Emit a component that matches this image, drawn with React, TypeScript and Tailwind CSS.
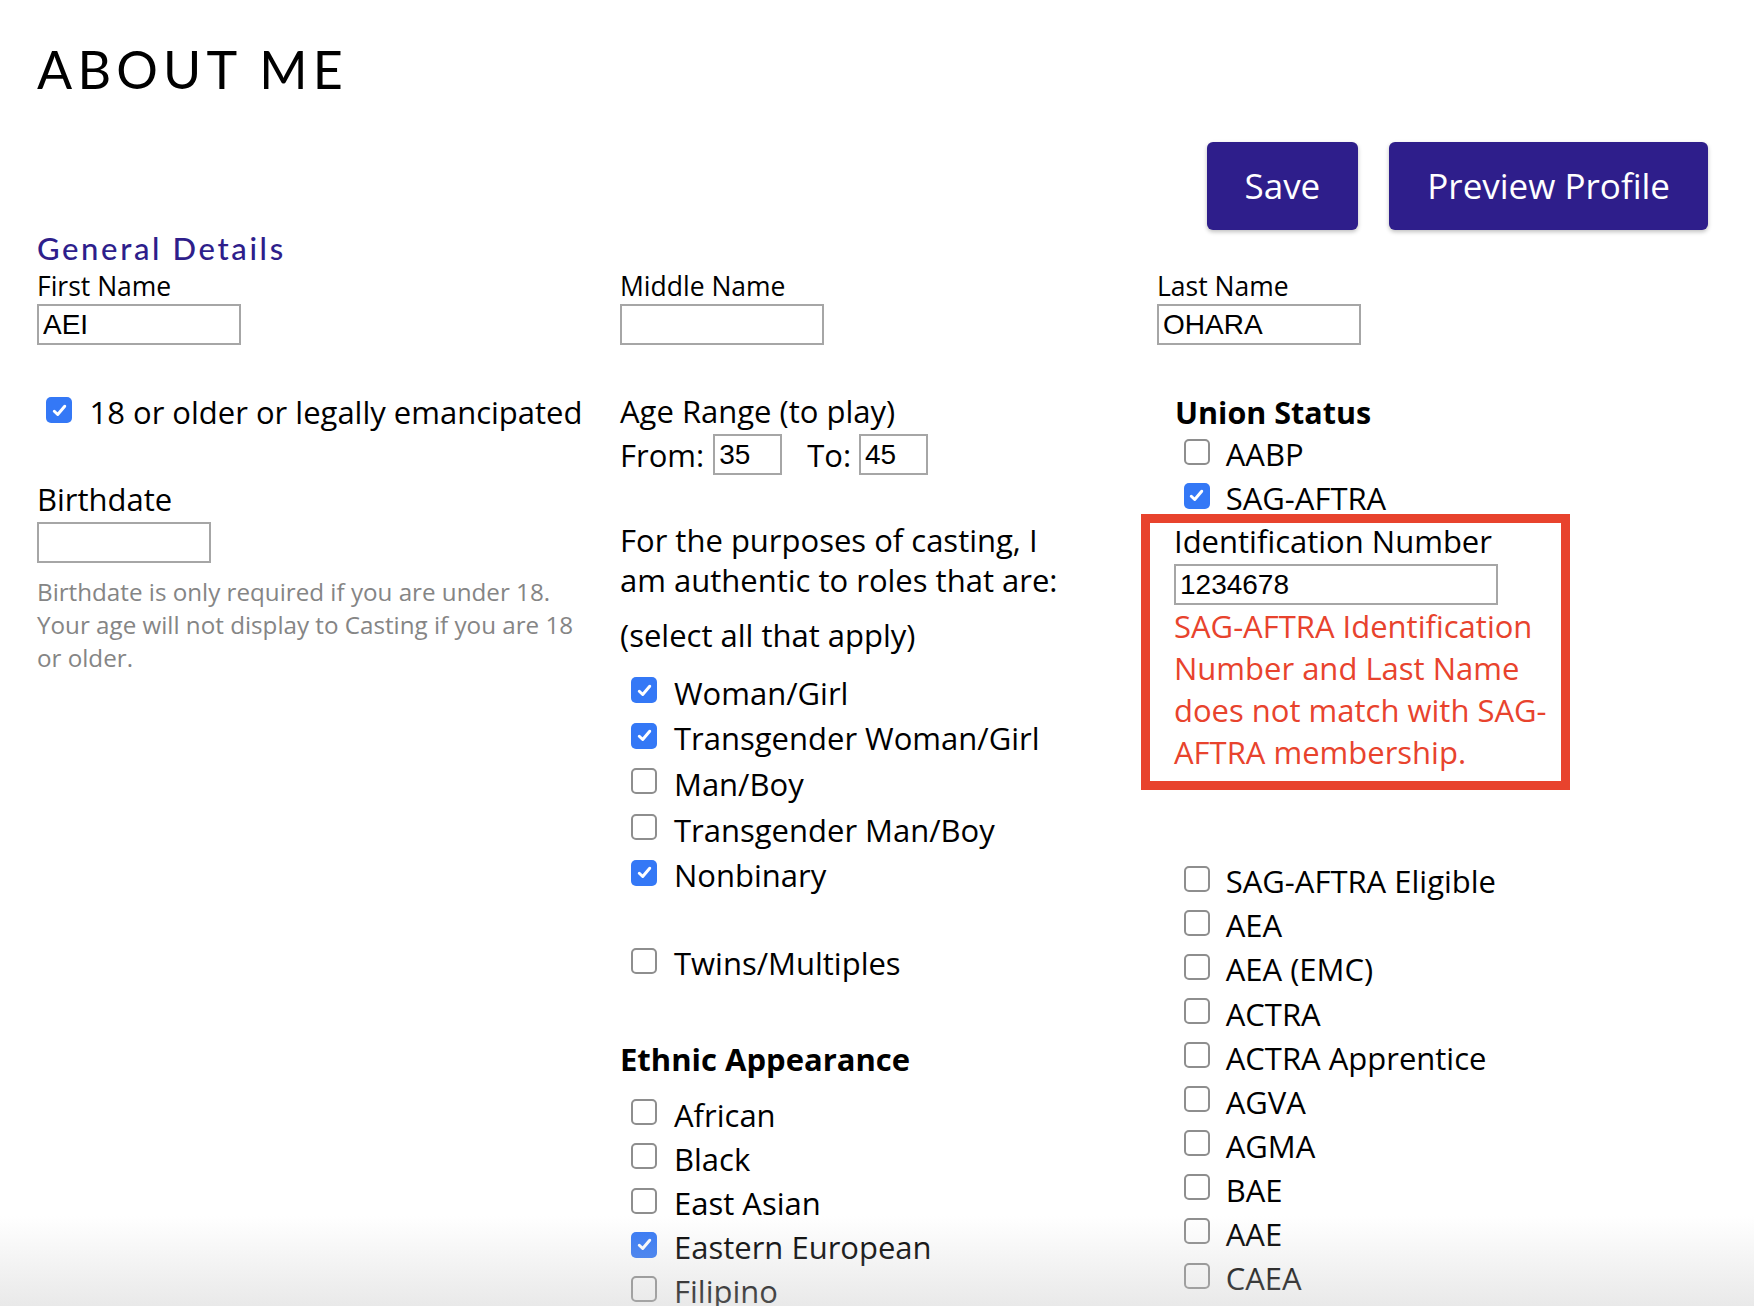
import React from "react";

const GENDER = [
  { label: "Woman/Girl", checked: true },
  { label: "Transgender Woman/Girl", checked: true },
  { label: "Man/Boy", checked: false },
  { label: "Transgender Man/Boy", checked: false },
  { label: "Nonbinary", checked: true },
];

const ETHNIC = [
  { label: "African", checked: false },
  { label: "Black", checked: false },
  { label: "East Asian", checked: false },
  { label: "Eastern European", checked: true },
  { label: "Filipino", checked: false },
];

const UNIONS = [
  "SAG-AFTRA Eligible",
  "AEA",
  "AEA (EMC)",
  "ACTRA",
  "ACTRA Apprentice",
  "AGVA",
  "AGMA",
  "BAE",
  "AAE",
  "CAEA",
];

function Box({ checked }: { checked?: boolean }) {
  if (checked) {
    return (
      <span className="flex h-[26px] w-[26px] shrink-0 items-center justify-center rounded-[5px] bg-[#3478f6]">
        <svg viewBox="0 0 16 16" className="h-[19px] w-[19px]" aria-hidden>
          <path
            d="M3.6 8.6l2.9 2.8 5.9-7"
            fill="none"
            stroke="white"
            strokeWidth="2.5"
            strokeLinecap="round"
            strokeLinejoin="round"
          />
        </svg>
      </span>
    );
  }
  return <span className="h-[26px] w-[26px] shrink-0 rounded-[5px] border-2 border-[#8e8e8e] bg-white" />;
}

function Row({ label, checked, className }: { label: string; checked?: boolean; className: string }) {
  return (
    <div className={`flex items-center ${className}`}>
      <span className="mb-[5px] flex">
        <Box checked={checked} />
      </span>
      <span className="text-[31px] leading-[36px] whitespace-nowrap">{label}</span>
    </div>
  );
}

function Field({ value, className }: { value?: string; className: string }) {
  return (
    <input
      readOnly
      value={value ?? ""}
      className={`block h-[41px] border-2 border-[#a6a6a6] bg-white pl-[4px] font-['Liberation_Sans',Arial,sans-serif] text-[28px] text-black outline-none ${className}`}
    />
  );
}

export default function App() {
  return (
    <div className="relative h-[1306px] overflow-hidden bg-white pl-[37px] pr-[46px] pt-[43px] font-['Open_Sans',sans-serif] text-black">
      {/* Title */}
      <h1 className="font-['Lato',sans-serif] text-[52px] font-normal leading-[52px] tracking-[0.1em]">ABOUT ME</h1>

      {/* Actions */}
      <div className="mt-[47px] flex justify-end gap-[31px]">
        <button className="h-[88px] rounded-[6px] bg-[#2e1e8b] px-[38px] text-[35px] text-white shadow-[0_2px_4px_rgba(0,0,0,0.25)]">
          Save
        </button>
        <button className="h-[88px] rounded-[6px] bg-[#2e1e8b] px-[38px] text-[35px] text-white shadow-[0_2px_4px_rgba(0,0,0,0.25)]">
          Preview Profile
        </button>
      </div>

      <h2 className="font-['Lato',sans-serif] text-[31px] font-medium leading-[36px] tracking-[0.085em] text-[#2e1e8b]">
        General Details
      </h2>

      <div className="mt-[5px] grid grid-cols-[583px_537px_1fr]">
        {/* Column 1 */}
        <div className="flex flex-col">
          <label className="text-[26.5px] leading-[30px]">First Name</label>
          <Field value="AEI" className="mt-[3px] w-[204px]" />

          <div className="mt-[49px] flex items-start pl-[9px]">
            <span className="mt-[3px] flex">
              <Box checked />
            </span>
            <span className="ml-[17.5px] text-[31px] leading-[36px] whitespace-nowrap">
              18 or older or legally emancipated
            </span>
          </div>

          <label className="mt-[50.6px] text-[31px] leading-[36px]">Birthdate</label>
          <Field className="mt-[5.7px] w-[174px]" />
          <p className="mt-[11.6px] w-[550px] text-[24.2px] leading-[33px] text-[#858585]">
            Birthdate is only required if you are under 18. Your age will not display to Casting if you are 18 or
            older.
          </p>
        </div>

        {/* Column 2 */}
        <div className="flex flex-col">
          <label className="text-[26.5px] leading-[30px]">Middle Name</label>
          <Field className="mt-[3px] w-[204px]" />

          <div className="mt-[48px] text-[31px] leading-[36px]">Age Range (to play)</div>
          <div className="mt-[5px] flex h-[41px] items-center text-[31px] leading-[36px]">
            <span>From:</span>
            <Field value="35" className="ml-[9px] w-[69px]" />
            <span className="ml-[25px]">To:</span>
            <Field value="45" className="ml-[8px] w-[69px]" />
          </div>

          <p className="mt-[44.5px] w-[450px] text-[31px] leading-[40.6px]">
            For the purposes of casting, I am authentic to roles that are:
          </p>
          <p className="mt-[14px] text-[31px] leading-[40.6px]">(select all that apply)</p>

          <div className="mt-[14.4px] flex flex-col pl-[11px]">
            {GENDER.map((g) => (
              <Row key={g.label} label={g.label} checked={g.checked} className="h-[45.7px] gap-[17px]" />
            ))}
          </div>
          <div className="mt-[42.3px] pl-[11px]">
            <Row label="Twins/Multiples" className="h-[45.7px] gap-[17px]" />
          </div>

          <h3 className="mt-[54.5px] text-[31px] font-bold leading-[36px]">Ethnic Appearance</h3>
          <div className="mt-[16px] flex flex-col pl-[11px]">
            {ETHNIC.map((e) => (
              <Row key={e.label} label={e.label} checked={e.checked} className="h-[44.2px] gap-[17px]" />
            ))}
          </div>
        </div>

        {/* Column 3 */}
        <div className="flex flex-col">
          <label className="text-[26.5px] leading-[30px]">Last Name</label>
          <Field value="OHARA" className="mt-[3px] w-[204px]" />

          <h3 className="ml-[18px] mt-[48.5px] text-[30.5px] font-bold leading-[36px]">Union Status</h3>
          <div className="mt-[3px] flex flex-col pl-[26.7px]">
            <Row label="AABP" className="h-[43.7px] gap-[16px]" />
            <Row label="SAG-AFTRA" checked className="h-[43.7px] gap-[16px]" />
          </div>

          {/* Error box */}
          <div className="relative -ml-[16px] -mt-[6px] w-[429px] border-[9px] border-[#e8432d] bg-white pb-[8px] pl-[24px]">
            <div className="text-[31px] leading-[36px]">Identification Number</div>
            <Field value="1234678" className="mt-[5.3px] w-[324px]" />
            <p className="text-[31px] leading-[42px] text-[#e8432d]">
              SAG-AFTRA Identification Number and Last Name does not match with SAG-AFTRA membership.
            </p>
          </div>

          <div className="mt-[69px] flex flex-col pl-[26.7px]">
            {UNIONS.map((u) => (
              <Row key={u} label={u} className="h-[44.1px] gap-[16px]" />
            ))}
          </div>
        </div>
      </div>

      {/* bottom fade */}
      <div className="pointer-events-none absolute bottom-0 left-0 right-0 h-[90px] bg-linear-to-b from-transparent to-[rgba(200,200,200,0.4)]" />
    </div>
  );
}
